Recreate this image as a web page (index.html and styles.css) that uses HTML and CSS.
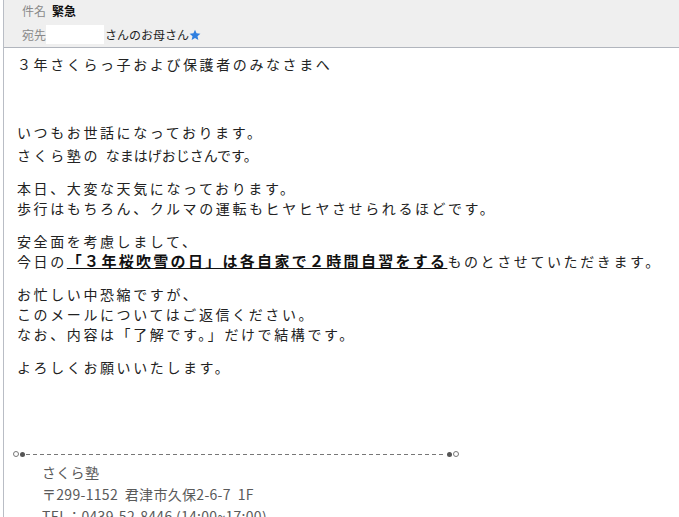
FILE: index.html
```html
<!DOCTYPE html>
<html lang="ja">
<head>
    <meta charset="UTF-8">
    <title>緊急</title>
    <link rel="stylesheet" href="styles.css">
</head>
<body>
    <div class="viewer">
        <div class="header">
            <div class="row">
                <span class="label">件名</span>
                <span class="subject">緊急</span>
            </div>
            <div class="row">
                <span class="label">宛先</span>
                <span class="masked"></span>
                <span class="to">さんのお母さん</span>
                <svg class="star" width="12" height="12" viewBox="0 0 24 24">
                    <path d="M12 1.5l3.1 7.1 7.7.7-5.8 5.1 1.7 7.6L12 18l-6.7 4 1.7-7.6-5.8-5.1 7.7-.7z" fill="#2f7fe0"/>
                </svg>
            </div>
        </div>

        <div class="mail">
            <p class="greet">３年さくらっ子および保護者のみなさまへ</p>

            <p>いつもお世話になっております。
            <span class="line">さくら塾の <span class="prop">なまはげおじさんです。</span></span></p>

            <p>本日、大変な天気になっております。<br>
            歩行はもちろん、クルマの運転もヒヤヒヤさせられるほどです。</p>

            <p>安全面を考慮しまして、<br>
            今日の<b class="notice">「３年桜吹雪の日」は各自家で２時間自習をする</b>ものとさせていただきます。</p>

            <p>お忙しい中恐縮ですが、<br>
            このメールについてはご返信ください。<br>
            なお、内容は「了解です。」だけで結構です。</p>

            <p>よろしくお願いいたします。</p>

            <div class="divider">
                <span class="ring"></span>
                <span class="dot"></span>
                <span class="dash"></span>
                <span class="dot"></span>
                <span class="ring"></span>
            </div>
            <div class="signature">
                <div>さくら塾</div>
                <div>〒299-1152&nbsp; 君津市久保2-6-7&nbsp; 1F</div>
                <div>TEL：0439-52-8446 (14:00~17:00)</div>
            </div>
        </div>
    </div>
</body>
</html>
```

FILE: styles.css
```css
html, body {
    margin: 0;
    background: #fff;
    height: 100%;
    overflow: hidden;
}

body {
    font-family: "Noto Sans CJK JP", "Noto Sans", sans-serif;
    color: #111;
}

.viewer {
    margin-left: 3px;
    border-left: 1px solid #b9bdc5;
    min-height: 100%;
}

.header {
    background: #efefef;
    border-bottom: 1px solid #b1b5bd;
    padding: 0 0 3px 18px;
    display: flex;
    flex-direction: column;
    gap: 4px;
    font-size: 12px;
}

.row {
    display: flex;
    align-items: center;
    height: 20px;
}

.label {
    color: #8a8a8a;
    width: 24px;
}

.subject {
    font-weight: bold;
    margin-left: 6px;
    color: #111;
}

.masked {
    background: #fff;
    width: 58px;
    height: 19px;
}

.to {
    margin-left: 1px;
    color: #222;
}

.star {
    margin-top: 2px;
}

.mail {
    padding: 6px 0 0 13px;
    white-space: nowrap;
}

.mail p {
    margin: 0 0 13px;
    font-size: 14px;
    line-height: 20px;
    letter-spacing: 2.6px;
    color: #222;
}

.mail p.greet {
    margin-bottom: 48px;
}

.line {
    display: block;
    margin-top: 3px;
}

.prop {
    letter-spacing: 0;
}

.notice {
    font-size: 15px;
    letter-spacing: 2.3px;
    text-decoration: underline;
    color: #111;
}

.divider {
    display: flex;
    align-items: center;
    width: 446px;
    height: 8px;
    margin: 73px 0 0 -4px;
}

.ring {
    width: 4px;
    height: 4px;
    border: 1px solid #777;
    border-radius: 50%;
}

.dot {
    width: 5px;
    height: 5px;
    background: #555;
    border-radius: 50%;
    margin: 0 1px;
}

.dash {
    flex: 1;
    height: 1px;
    background: repeating-linear-gradient(90deg, #777 0 4px, transparent 4px 7px);
}

.signature {
    padding: 3px 0 0 25px;
    font-size: 14px;
    line-height: 22px;
    letter-spacing: 0.3px;
    color: #5a5a5a;
}
```
